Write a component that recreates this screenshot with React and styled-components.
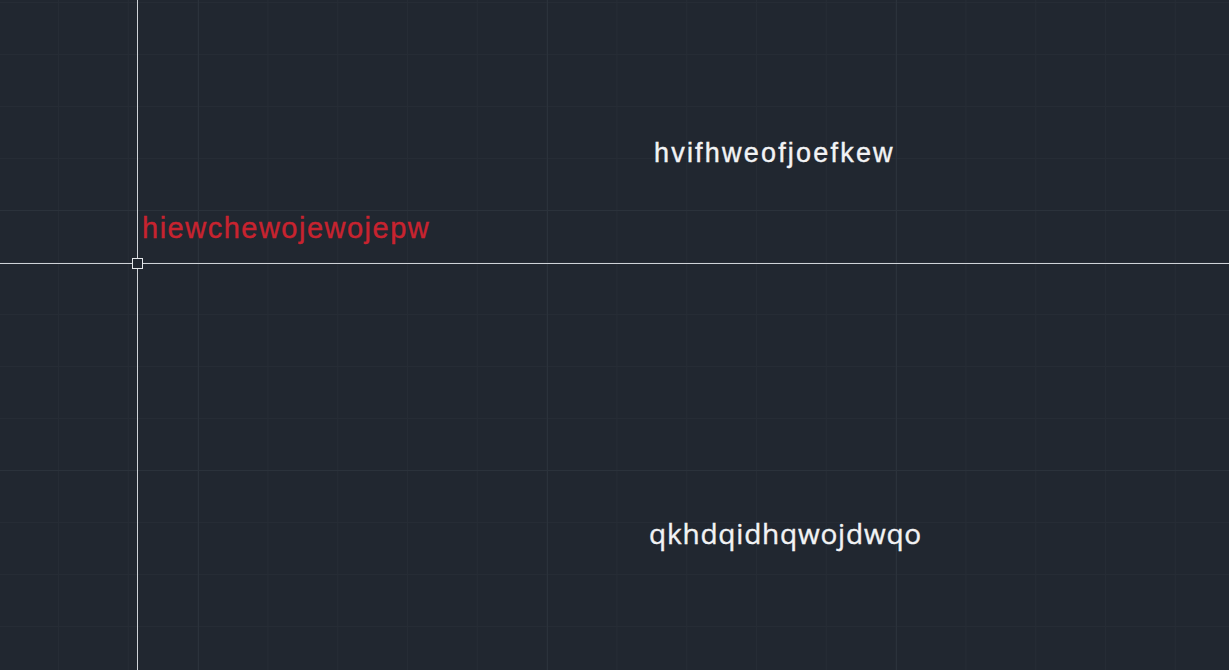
import React from 'react';
import styled, { createGlobalStyle } from 'styled-components';

const GlobalStyle = createGlobalStyle`
    html, body {
        margin: 0;
        padding: 0;
        background: #212730;
        overflow: hidden;
    }
`

const entidades = [
    { id: 1, texto: 'hiewchewojewojepw', x: 142, y: 214, color: '#c8232f', size: 29, spacing: 1.5, fuente: 'arial' },
    { id: 2, texto: 'hvifhweofjoefkew', x: 654, y: 140, color: '#f2f3f5', size: 27, spacing: 2.2, fuente: 'arial' },
    { id: 3, texto: 'qkhdqidhqwojdwqo', x: 649, y: 519, color: '#f2f3f5', size: 28, spacing: 0.8, fuente: 'gothic' },
]

const App = () => {
    return (
        <>
            <GlobalStyle />
            <Lienzo>
                {entidades.map((e) => (
                    <TextoCad
                        key={e.id}
                        $x={e.x}
                        $y={e.y}
                        $color={e.color}
                        $size={e.size}
                        $spacing={e.spacing}
                        $fuente={e.fuente}
                    >
                        {e.texto}
                    </TextoCad>
                ))}
                <Cursor $x={137} $y={263}>
                    <LineaV />
                    <LineaH />
                    <Caja />
                </Cursor>
            </Lienzo>
        </>
    );
}

const Lienzo = styled.div`
    position: relative;
    width: 1229px;
    height: 670px;
    overflow: hidden;
    background-color: #212730;
    background-image:
        linear-gradient(to right, #2b323b 1px, transparent 1px),
        linear-gradient(to bottom, #2b323b 1px, transparent 1px),
        linear-gradient(to right, #262c35 1px, transparent 1px),
        linear-gradient(to bottom, #262c35 1px, transparent 1px);
    background-size:
        349px 100%,
        100% 260px,
        69.8px 100%,
        100% 52px;
    background-position:
        198px 0,
        0 210px,
        58px 0,
        0 2px;
`

const TextoCad = styled.div`
    position: absolute;
    left: ${p => p.$x}px;
    top: ${p => p.$y}px;
    color: ${p => p.$color};
    font-size: ${p => p.$size}px;
    letter-spacing: ${p => p.$spacing}px;
    line-height: 1;
    white-space: nowrap;
    -webkit-text-stroke: 0.4px ${p => p.$color};
    font-family: ${p => p.$fuente === 'gothic'
        ? '"Open Sans", "DejaVu Sans", sans-serif'
        : '"Liberation Sans", Arial, sans-serif'};
`

const Cursor = styled.div`
    position: absolute;
    left: 0;
    top: 0;
    width: 100%;
    height: 100%;
    pointer-events: none;
    --cx: ${p => p.$x}px;
    --cy: ${p => p.$y}px;
`

const LineaV = styled.div`
    position: absolute;
    left: var(--cx);
    top: 0;
    width: 1px;
    height: 100%;
    background: #cfd3d8;
`

const LineaH = styled.div`
    position: absolute;
    top: var(--cy);
    left: 0;
    height: 1px;
    width: 100%;
    background: #cfd3d8;
`

const Caja = styled.div`
    position: absolute;
    left: calc(var(--cx) - 5px);
    top: calc(var(--cy) - 5px);
    width: 9px;
    height: 9px;
    border: 1px solid #e4e7ea;
    background: #212730;
`

export default App;
